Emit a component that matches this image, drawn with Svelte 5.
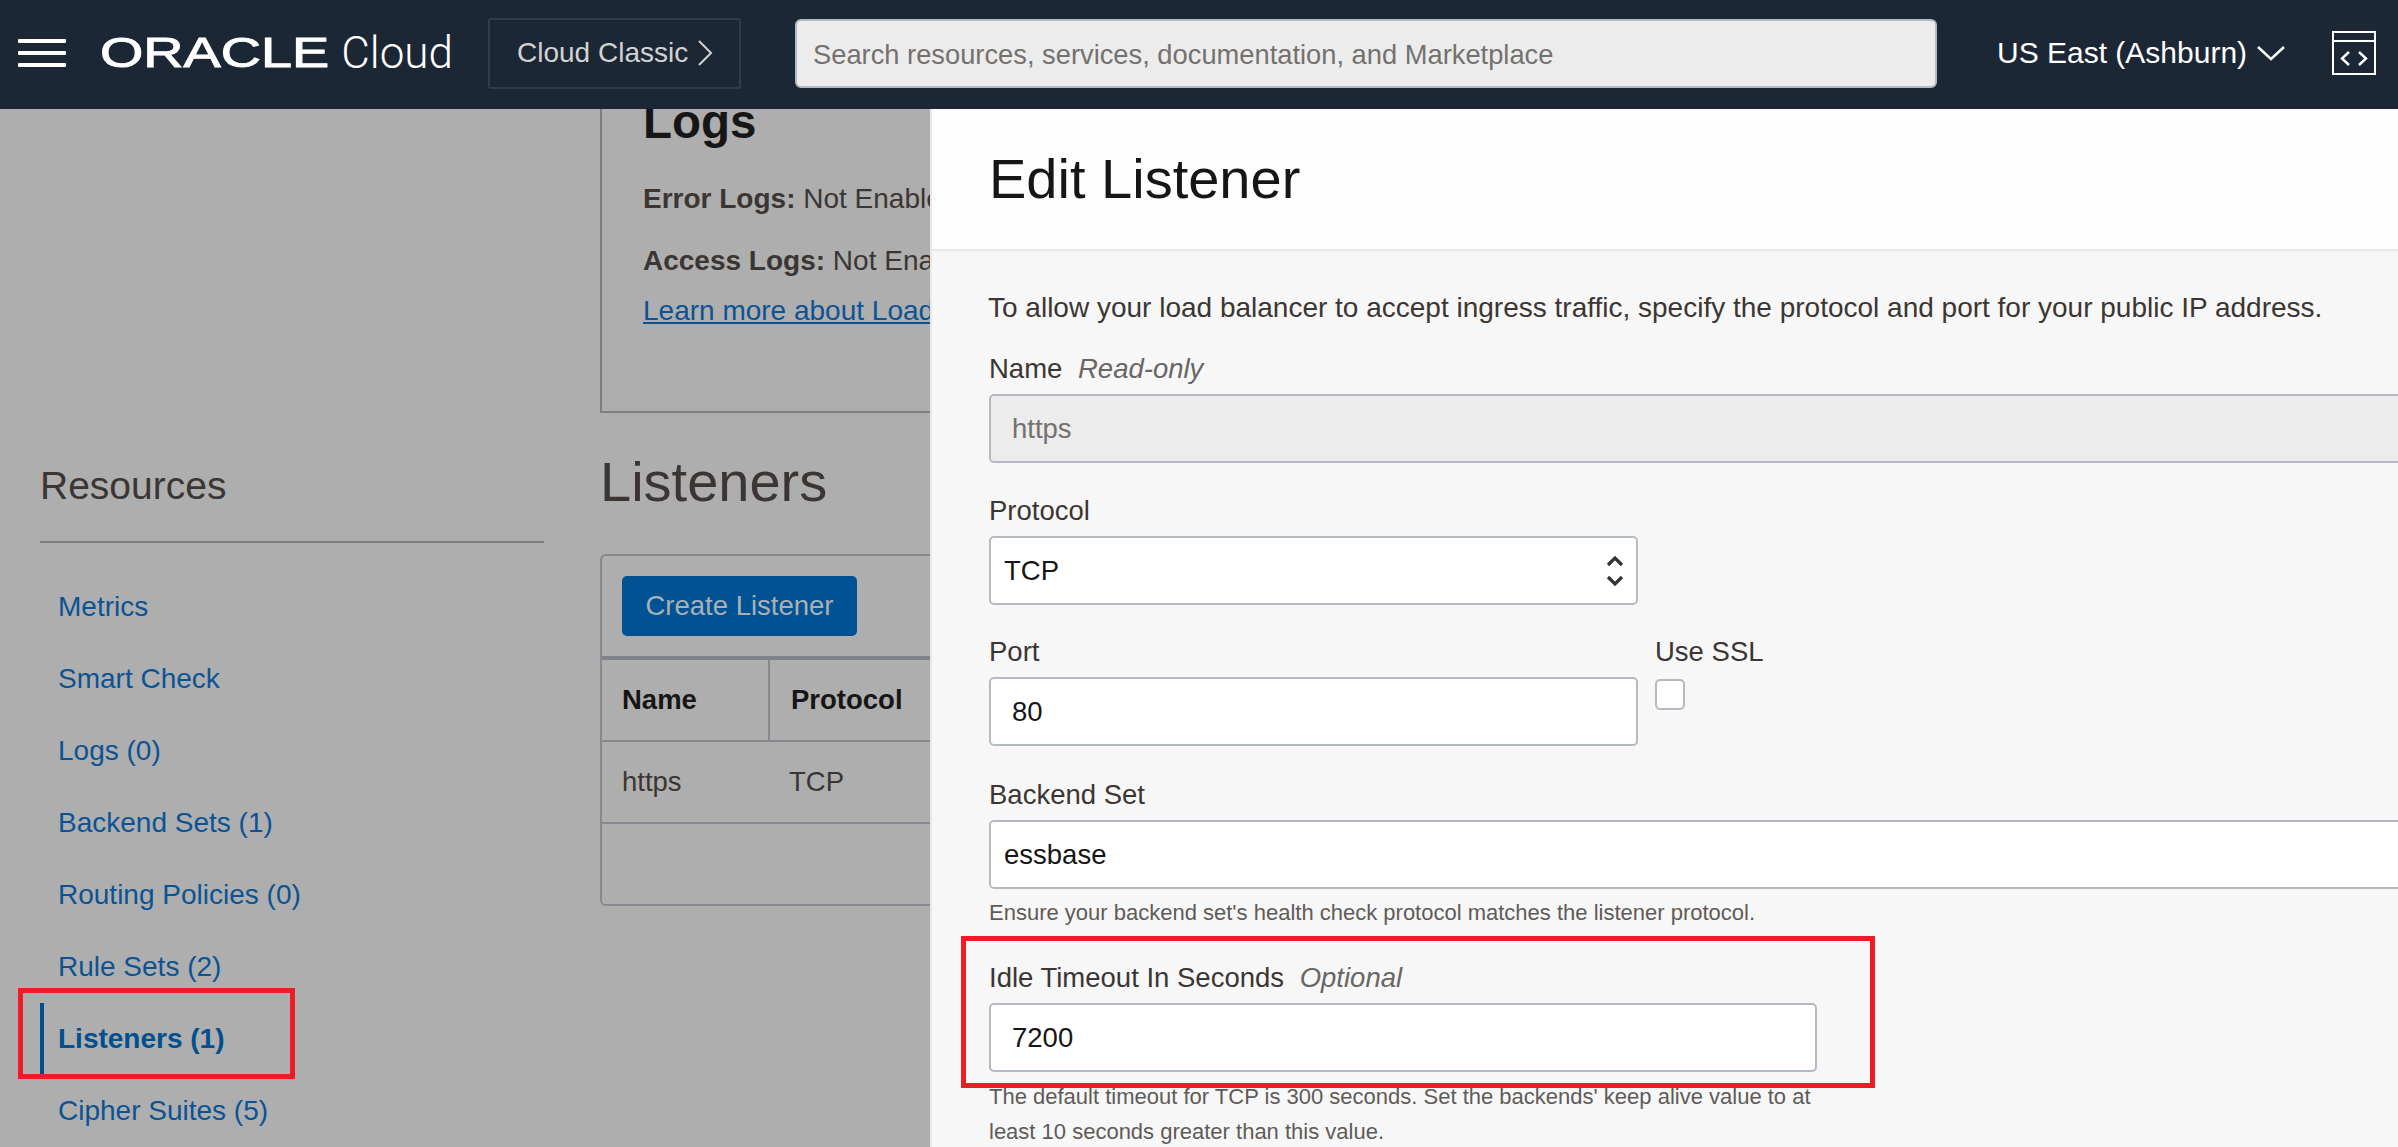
<script>
  const resources = [
    { name: 'Metrics' },
    { name: 'Smart Check' },
    { name: 'Logs (0)' },
    { name: 'Backend Sets (1)' },
    { name: 'Routing Policies (0)' },
    { name: 'Rule Sets (2)' },
    { name: 'Listeners (1)', active: true },
    { name: 'Cipher Suites (5)' },
  ]
</script>

<div class="page">
  <header class="topbar">
    <button class="burger" aria-label="Menu"><span></span><span></span><span></span></button>
    <div class="logo"><span class="oracle">ORACLE</span><span class="cloud">Cloud</span></div>
    <button class="classic">
      Cloud Classic
      <svg width="15" height="26" viewBox="0 0 15 26"><path d="M1 1l12 12L1 25" fill="none" stroke="currentColor" stroke-width="2" /></svg>
    </button>
    <input class="search" placeholder="Search resources, services, documentation, and Marketplace" />
    <div class="region">
      US East (Ashburn)
      <svg width="28" height="15" viewBox="0 0 28 15"><path d="M1 1l13 12L27 1" fill="none" stroke="#fff" stroke-width="2.4" /></svg>
    </div>
    <svg class="dev" width="44" height="44" viewBox="0 0 44 44" fill="none" stroke="#fff" stroke-width="2">
      <rect x="1" y="1" width="42" height="42" />
      <path d="M1 10h42" />
      <path d="M17 21l-7 6.500 7 6.500M27 21l7 6.500-7 6.500" stroke-width="2.400" />
    </svg>
  </header>

  <div class="body">
    <aside class="sidebar">
      <h3>Resources</h3>
      <nav>
        {#each resources as r}
          <a href="#top" class:active={r.active}>{r.name}</a>
        {/each}
      </nav>
    </aside>

    <main class="content">
      <section class="logs-card">
        <h2>Logs</h2>
        <p><b>Error Logs:</b> Not Enabled</p>
        <p><b>Access Logs:</b> Not Enabled</p>
        <a href="#top">Learn more about Load Balancer logs</a>
      </section>

      <h1>Listeners</h1>

      <section class="table-card">
        <div class="toolbar"><button class="primary">Create Listener</button></div>
        <table>
          <thead>
            <tr><th class="c1">Name</th><th class="c2">Protocol</th></tr>
          </thead>
          <tbody>
            <tr><td>https</td><td>TCP</td></tr>
          </tbody>
        </table>
      </section>
    </main>

    <aside class="drawer">
      <div class="drawer-head"><h1>Edit Listener</h1></div>
      <div class="drawer-body">
        <p class="intro">To allow your load balancer to accept ingress traffic, specify the protocol and port for your public IP address.</p>

        <div class="field">
          <label for="l-name">Name <em>Read-only</em></label>
          <input id="l-name" class="wide pad" value="https" disabled />
        </div>

        <div class="field">
          <label for="l-proto">Protocol</label>
          <div class="select-wrap">
            <select id="l-proto"><option>TCP</option></select>
            <svg width="18" height="30" viewBox="0 0 18 30" fill="none" stroke="#333" stroke-width="3.200"><path d="M2 9l7-7 7 7M2 21l7 7 7-7" /></svg>
          </div>
        </div>

        <div class="field port-row">
          <div>
            <label for="l-port">Port</label>
            <input id="l-port" class="pad" value="80" />
          </div>
          <div class="ssl">
            <label for="l-ssl">Use SSL</label>
            <span id="l-ssl" class="check"></span>
          </div>
        </div>

        <div class="field">
          <label for="l-set">Backend Set</label>
          <input id="l-set" class="wide" value="essbase" />
          <small>Ensure your backend set's health check protocol matches the listener protocol.</small>
        </div>

        <div class="field">
          <label for="l-idle">Idle Timeout In Seconds <em>Optional</em></label>
          <input id="l-idle" class="idle pad" value="7200" />
          <small class="idle-help">The default timeout for TCP is 300 seconds. Set the backends' keep alive value to at least 10 seconds greater than this value.</small>
        </div>
      </div>
    </aside>
  </div>

  <div class="mark mark-nav"></div>
  <div class="mark mark-idle"></div>
</div>

<style>
  :global(body) { margin: 0; }
  .page {
    position: relative;
    width: 2398px;
    height: 1147px;
    overflow: hidden;
    display: flex;
    flex-direction: column;
    font-family: "Liberation Sans", Arial, sans-serif;
    font-size: 27.5px;
    color: #3b3633;
    background: #aeaeae;
  }

  .topbar {
    height: 109px;
    flex: none;
    box-sizing: border-box;
    padding-bottom: 3px;
    display: flex;
    align-items: center;
    background: #1c2735;
  }
  .burger {
    width: 48px;
    height: 28px;
    margin-left: 18px;
    padding: 0;
    border: 0;
    background: none;
    display: flex;
    flex-direction: column;
    justify-content: space-between;
  }
  .burger span { height: 4px; border-radius: 1px; background: #fff; }
  .logo {
    margin-left: 34px;
    width: 353px;
    display: flex;
    align-items: center;
    color: #fff;
  }
  .oracle {
    width: 243px;
    font-size: 42px;
    font-weight: 400;
    -webkit-text-stroke: 1px #fff;
    transform: scaleX(1.326);
    transform-origin: left center;
  }
  .cloud {
    font-family: Roboto, sans-serif;
    font-size: 44px;
    font-weight: 300;
  }
  .classic {
    width: 253px;
    height: 71px;
    margin-left: 35px;
    padding: 0 0 0 27px;
    display: flex;
    align-items: center;
    gap: 10px;
    background: none;
    border: 2px solid #333d4a;
    border-radius: 3px;
    color: #d2d2d2;
    font: inherit;
    font-size: 28px;
  }
  .search {
    width: 1142px;
    height: 69px;
    margin-left: 54px;
    padding: 3px 16px 0;
    box-sizing: border-box;
    background: #ececec;
    border: 2px solid #b5bac2;
    border-radius: 6px;
    font: inherit;
    font-size: 27.300px;
  }
  .search::placeholder { color: #75716e; opacity: 1; }
  .region {
    margin-left: 60px;
    display: flex;
    align-items: center;
    gap: 10px;
    color: #fff;
    font-size: 30px;
  }
  .dev { margin-left: 47px; }

  .body {
    position: relative;
    flex: 1;
    display: flex;
    min-height: 0;
    overflow: hidden;
  }

  .sidebar { width: 504px; margin-left: 40px; flex: none; padding-top: 355px; }
  .sidebar h3 {
    margin: 0;
    height: 77px;
    font-size: 39px;
    font-weight: 400;
    line-height: 44px;
    border-bottom: 2px solid #7e7e7e;
  }
  nav { display: flex; flex-direction: column; margin-top: 28px; }
  nav a {
    height: 72px;
    line-height: 72px;
    padding-left: 18px;
    font-size: 28px;
    color: #0b5394;
    text-decoration: none;
  }
  nav a.active {
    padding-left: 14px;
    border-left: 4px solid #00508f;
    font-weight: 700;
    color: #00508f;
  }

  .content { margin-left: 56px; flex: 1; min-width: 0; }
  .logs-card {
    height: 400px;
    margin-top: -96px;
    padding: 82px 0 0 41px;
    box-sizing: border-box;
    border: solid #7e7e7e;
    border-width: 0 0 2px 2px;
    white-space: nowrap;
    font-size: 28px;
  }
  .logs-card h2 { margin: 0 0 30px; font-size: 47.500px; line-height: 54px; color: #161616; }
  .logs-card p { margin: 0 0 22px; line-height: 40px; }
  .logs-card a { display: block; margin-top: -12px; line-height: 40px; color: #0b5394; }
  .content h1 {
    margin: 37px 0 40px;
    font-size: 56px;
    font-weight: 400;
    line-height: 64px;
    color: #3b3633;
  }
  .table-card {
    height: 352px;
    box-sizing: border-box;
    border: solid #868a8e;
    border-width: 2px 0 2px 2px;
    border-radius: 6px 0 0 6px;
  }
  .toolbar { height: 104px; padding: 20px 0 0 20px; box-sizing: border-box; border-bottom: 4px solid #808488; }
  .primary {
    width: 235px;
    height: 60px;
    border: 0;
    border-radius: 5px;
    background: #005292;
    color: #a9b0b6;
    font: inherit;
  }
  table { width: 100%; border-collapse: collapse; }
  th, td { padding: 0 0 0 20px; text-align: left; border-bottom: 2px solid #868a8e; }
  th { height: 80px; color: #161616; }
  td { height: 80px; }
  .c1 { width: 146px; border-right: 2px solid #868a8e; }
  .c2 { padding-left: 21px; }

  .drawer {
    position: absolute;
    top: 0;
    bottom: 0;
    left: 930px;
    width: 1600px;
    box-sizing: border-box;
    border-left: 2px solid #e8e8e8;
    background: #f7f7f7;
  }
  .drawer-head {
    height: 142px;
    box-sizing: border-box;
    padding: 38px 0 0 57px;
    background: #fdfdfd;
    border-bottom: 2px solid #e8e8e8;
  }
  .drawer-head h1 { margin: 0; font-size: 56px; font-weight: 400; line-height: 64px; color: #161616; }
  .drawer-body { padding: 37px 0 0 56px; }
  .intro { margin: 0 0 20px; font-size: 28px; line-height: 40px; }
  .field { margin: 0 0 27px 1px; }
  label { display: block; height: 40px; line-height: 42px; margin-bottom: 6px; }
  em { margin-left: 8px; color: #6a6663; }
  input:not(.search), select {
    display: block;
    width: 649px;
    height: 69px;
    padding: 0 13px;
    box-sizing: border-box;
    background: #fff;
    border: 2px solid #b5bac2;
    border-radius: 5px;
    color: #161616;
    font: inherit;
    appearance: none;
  }
  input.wide { width: 100%; max-width: 1500px; }
  input:disabled { background: #ececec; color: #75716e; opacity: 1; }
  input.pad { padding-left: 21px; }
  input.idle { width: 828px; }
  .select-wrap { position: relative; width: 649px; }
  .select-wrap svg { position: absolute; right: 14px; top: 20px; }
  .port-row { display: flex; gap: 17px; margin-top: -1px; margin-bottom: 28px; }
  .ssl label { margin-bottom: 8px; }
  .check {
    display: block;
    width: 30px;
    height: 31px;
    box-sizing: border-box;
    background: #fff;
    border: 2px solid #b5bac2;
    border-radius: 5px;
  }
  small {
    display: block;
    margin-top: 6px;
    font-size: 22px;
    line-height: 35px;
    color: #5f5b58;
  }
  .idle-help { width: 828px; margin-top: 7px; }

  .mark {
    position: absolute;
    box-sizing: border-box;
    border: 5px solid #ee1c25;
    pointer-events: none;
  }
  .mark-nav { left: 18px; top: 988px; width: 277px; height: 91px; }
  .mark-idle { left: 961px; top: 936px; width: 914px; height: 152px; }
</style>
